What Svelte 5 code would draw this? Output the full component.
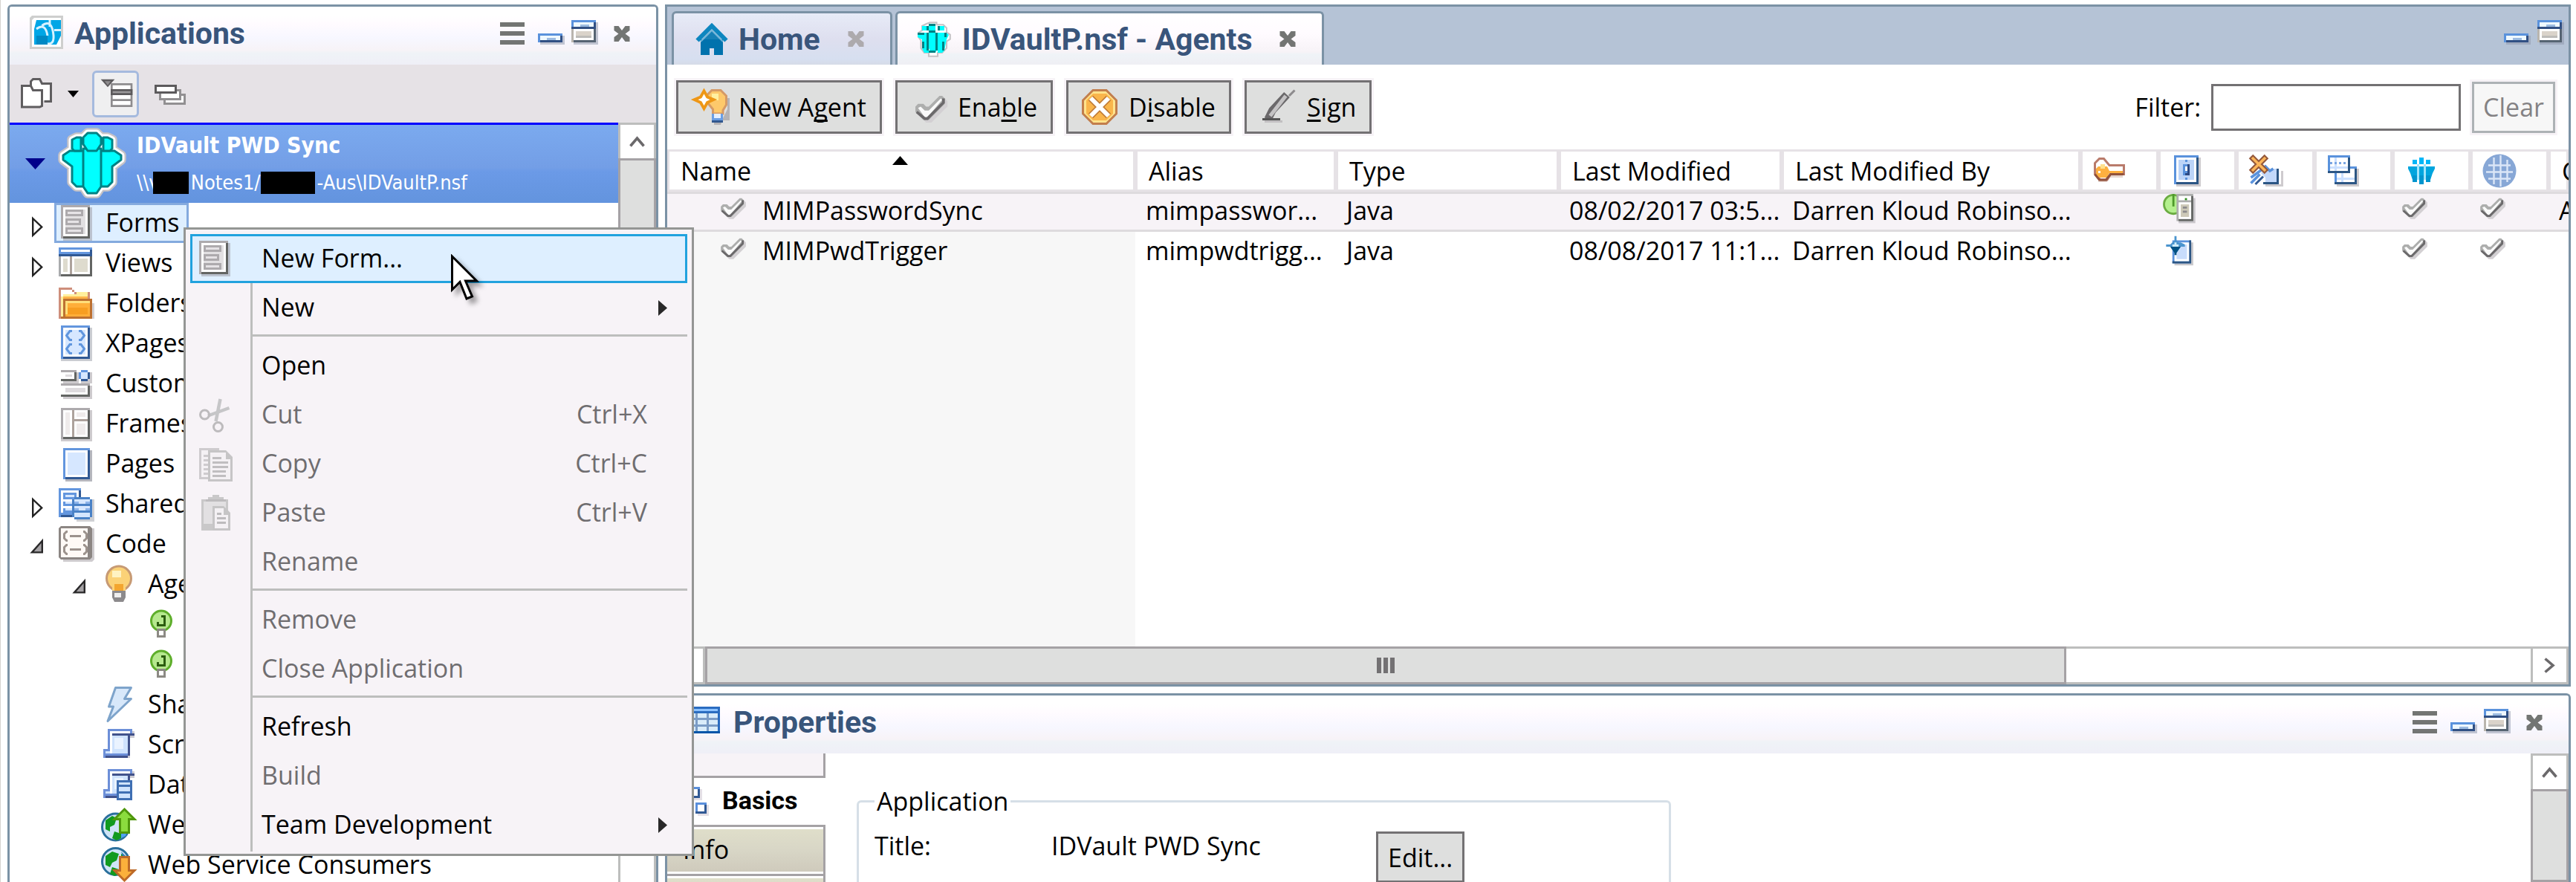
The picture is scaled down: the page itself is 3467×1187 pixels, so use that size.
<script lang="ts">
	type MenuItem = { label: string; icon?: string; keys?: string; disabled?: boolean; submenu?: boolean };

	const fill = (color: string, d: string) => `<path fill="${color}" d="${d}"/>`;
	const line = (color: string, d: string, w = 1) =>
		`<path fill="none" stroke="${color}" stroke-width="${w}" d="${d}"/>`;

	const crew = 'M3 12l3-2h6v16H9l-2-2v-7l-4-3zM29 12l-3-2h-6v16h3l2-2v-7l4-3zM12 9h8v17l-2 3h-4l-2-3z';
	const heads = 'M7 5l2-1h2v6H8L7 9zM25 5l-2-1h-2v6h3l1-1zM14 2h4l2 2v3l-2 3h-4l-2-3V4z';

	const tick =
		fill('#d3d0d3', 'M1 5l1-1h2l1 1h1l4-4h1l1 1v2l-6 6H4L1 7z') +
		fill('#adaead', 'M0 4l1-1h2l1 1h1l4-4h1l1 1v2L5 9H3L0 6z') +
		fill('#fbfbfb', 'M1 4.500l1-.5 1.500 1.500H5L9.500 1l.5.5L4.500 8h-1z') +
		line('#6b696b', 'M.5 6l3 2.500h1l6-6V1');
	const globe =
		'<circle cx="6.500" cy="9" r="6" fill="#cfe4f7" stroke="#2a6f9c"/>' +
		fill('#119a1f', 'M2 6l3-2 2 1-1 3-2 1v2l-2-1zM6 11l3 1v2l-2 1-2-1zM9 5l2 1v2H9z') +
		fill('#4ea2f2', 'M9 12l3-2-1 3-2 1z');
	const globeUp =
		'<circle cx="6.500" cy="6.500" r="6" fill="#cfe4f7" stroke="#2a6f9c"/>' +
		fill('#119a1f', 'M2 4l3-2 3 1-1 3-2 1-1 2-2-1zM5 9l3 1v2l-2 1-2-1zM9 3l2 1v2H9z') +
		fill('#2f78b8', 'M9 2l3 3v3h-1z');
	const scroll =
		fill('#cccbd2', 'M4 2h11v3h-2v9H3v-1h10z') +
		fill('#6c8fd8', 'M3 1h11v3h-2v10H1v-4h2z') +
		fill('#fff', 'M4 2h9v1H5v9H4z') +
		fill('#cfe3fd', 'M5 4h7v8H5zM2 11h2v1H2z') +
		fill('#41528b', 'M5 3h10v1H13v9h-1V4H5zM2 13h10v1H2z') +
		fill('#eaf3ff', 'M6 5h4v5H6z');

	const icons: Record<string, string> = {
		form:
			fill('#bcc3cf', 'M2 1h13v15H2z') +
			fill('#adaaad', 'M1 0h13v15H1z') +
			fill('#636563', 'M13 1h1v14H2v-1h11z') +
			fill('#fff', 'M2 1h11v13H2z') +
			fill('#e2e0e2', 'M3 2h9v11H3z') +
			fill('#adaaad', 'M3 2h8v3H3zM3 6h7v3H3zM3 10h8v3H3z') +
			fill('#e6e3e6', 'M4 3h6v1H4zM4 7h5v1H4zM4 11h6v1H4z'),
		view:
			fill('#a9abad', 'M0 4h15v10H0z') +
			fill('#636563', 'M14 5h1v9H1v-1h13z') +
			fill('#fff', 'M1 5h13v8H1z') +
			fill('#6396de', 'M0 1h15v4H0z') +
			fill('#315994', 'M14 2h1v3H0V4h14z') +
			fill('#fff', 'M1 2h13v1H1z') +
			fill('#dedbce', 'M2 6h2v6H2zM7 6h6v6H7z') +
			fill('#ada29c', 'M5 5h1v8H5z'),
		folder:
			fill('#d4d1d4', 'M1 15h15V8h-1v7z') +
			fill('#ce8e7b', 'M0 1h6v1h1v1h7v4h1v8H0z') +
			fill('#fff', 'M1 2h5v1h1v1h6v2H1z') +
			fill('#ffef9c', 'M1 5h1v9H1zM8 3h5v1H8zM2 4h11v1H2z') +
			fill('#ffb54a', 'M2 5h11v1H2z') +
			fill('#bd7131', 'M2 6h13v8H2zM1 14h14v1H1z') +
			fill('#ffdf7b', 'M3 7h11v6H3z') +
			fill('#ffae39', 'M4 8h10v6H3v-1h1z') +
			fill('#f79e21', 'M4 10h9v3H4z'),
		xpage:
			fill('#cbcdd2', 'M0 1h15v15H1V1z') +
			fill('#6396de', 'M1 0h13v15H1z') +
			fill('#315994', 'M13 1h1v14H2v-1h11z') +
			fill('#fff', 'M2 1h11v13H2z') +
			fill('#d6e7ff', 'M3 2h9v11H3z') +
			line('#6096de', 'M6 2.500H5l-1.500 2L5 6.500h1M9 2.500h1l1.500 2-1.500 2H9M6 8.500H5l-1.500 2L5 12.500h1M9 8.500h1l1.500 2-1.500 2H9'),
		custom:
			fill('#cecbce', 'M2 3h7v5H2zM2 9h13v6H2zM10 3h5v5h-5z') +
			fill('#adaaad', 'M1 2h7v5H1zM1 8h13v6H1z') +
			fill('#636563', 'M7 3h1v4H1V6h6zM13 9h1v5H1v-1h12z') +
			fill('#fff', 'M1 3h6v3H1zM1 9h12v4H1z') +
			fill('#dedbde', 'M3 4h3v1H3zM3 10h9v2H3z') +
			fill('#6396de', 'M10 2h3v1h1v3h-1v1h-3V6H9V3h1z') +
			fill('#315994', 'M10 6h3v1h-3zM13 3h1v3h-1z') +
			fill('#d6e7ff', 'M10 3h3v3h-3z'),
		frameset:
			fill('#cecbce', 'M1 2h14v14H1z') +
			fill('#adaaad', 'M1 1h13v14H1z') +
			fill('#636563', 'M13 2h1v13H2v-1h11z') +
			fill('#fff', 'M2 2h11v12H2z') +
			fill('#efebeb', 'M3 3h2v10H3zM8 3h4v2H8zM8 8h4v5H8z') +
			fill('#ada29c', 'M6 2h1v4h6v1H7v7H6z'),
		page:
			fill('#b5b6bd', 'M3 2h12v14H3z') +
			fill('#6396de', 'M2 1h12v14H2z') +
			fill('#315994', 'M13 2h1v13H3v-1h10z') +
			fill('#fff', 'M3 2h10v12H3z') +
			fill('#d6e7ff', 'M4 3h8v10H4z'),
		shared:
			fill('#6396de', 'M0 1h10v13H0z') +
			fill('#315994', 'M9 2h1v4H9zM1 13h6v1H1z') +
			fill('#fff', 'M1 2h8v10H1z') +
			fill('#6396de', 'M2 3h6v3H2zM2 7h5v2H2zM2 10h5v2H2z') +
			fill('#d6e7ff', 'M3 4h4v1H3zM3 7h4v1H3zM3 10h4v1H3z') +
			fill('#cfd0d4', 'M8 6h8v10H8z') +
			fill('#4a82c6', 'M7 5h7v1h1v8h-1v1H7v-1H6V6h1z') +
			fill('#d6e7ff', 'M7 6h7v2H7zM7 9h7v2H7zM7 12h7v2H7z') +
			fill('#8eb4ea', 'M7 7h2v1H7zM12 7h2v1h-2zM7 10h2v1H7zM12 10h2v1h-2z'),
		code:
			fill('#cecbce', 'M2 1h14v14l-1 1H2z') +
			fill('#8c8683', 'M1 0h13l1 1v13l-1 1H1l-1-1V1z') +
			fill('#fffaf6', 'M1 1h12v13H1z') +
			line('#9c928c', 'M4 2.500H3.500l-1 1v2l1 1H4M11 2.500h.5l1 1v2l-1 1H11M5 4.500h5M4 8.500H3.500l-1 1v2l1 1H4M11 8.500h.5l1 1v2l-1 1H11M5 10.500h5'),
		agents:
			'<circle cx="8" cy="5.500" r="5.500" fill="#fbd277" stroke="#c79a74"/>' +
			fill('#fbd277', 'M5 8h6v3H5z') +
			fill('#f3a52f', 'M6 8h4v3H6z') +
			fill('#fff3c2', 'M5 2h4v3H5z') +
			fill('#8c8a8c', 'M5 11h6v3l-1 2H6l-1-2z') +
			fill('#efefef', 'M6 12h3v2H6z'),
		java:
			'<circle cx="8" cy="6.500" r="4.500" fill="#b6e88e" stroke="#5eae2b"/>' +
			line('#2c5d10', 'M8 4.500h1.500v4h-3V7') +
			fill('#8c8a84', 'M6 10h4v4H6z') +
			fill('#fff', 'M7 11h2v2H7z'),
		action:
			'<path fill="#d8e8fa" stroke="#7ea4cb" stroke-linejoin="round" d="M6.500.5h7l-3 5h3L3 15.500l2.500-6.500h-2z"/>',
		script: scroll,
		database:
			scroll +
			fill('#3f6fb3', 'M7 6h7v9H7z') +
			fill('#cfe3fd', 'M8 7h5v1H8zM8 9h5v2H8zM8 12h5v2H8z'),
		provider:
			globe + '<path fill="#8bdc3e" stroke="#4f970d" d="M10.500 1l4.500 4.500h-2.500v6h-4v-6H6z"/>',
		consumer:
			globeUp + '<path fill="#fbb03b" stroke="#bd6a28" d="M8.500 4.500h4v6H15L10.500 15 6 10.500h2.500z"/>',
		cut:
			line('#c6c6c8', 'M10.500 1l-2 10M14.500 5L5 8.500', 1.5) +
			'<circle cx="3.500" cy="8" r="2" fill="none" stroke="#bdbbbd"/><circle cx="9.500" cy="13.500" r="2" fill="none" stroke="#bdbbbd"/>',
		copy:
			fill('#cecbce', 'M1 1h9v14H1z') +
			fill('#f4f1f4', 'M2 2h7v12H2z') +
			line('#cecbce', 'M3 4.500h2M3 6.500h2M3 8.500h2M3 10.500h2M3 12.500h2') +
			fill('#c6c5c6', 'M5 2h8l3 3v11H5z') +
			fill('#f4f1f4', 'M6 3h7v3h2v9H6z') +
			line('#c0bec0', 'M7 5.500h4M7 7.500h7M7 9.500h7M7 11.500h6M7 13.500h6'),
		paste:
			fill('#c9c8c9', 'M2 2h3V1h2V0h3v1h2v1h2v14H2z') +
			fill('#e2e0e2', 'M3 3h10v10H3z') +
			fill('#bdbbbd', 'M4 2h9v1H4z') +
			fill('#c6c5c6', 'M7 5h5l3 3v8H7z') +
			fill('#f4f1f4', 'M8 6h4v3h2v6H8z') +
			line('#bdbbbd', 'M9 8.500h2M9 10.500h4M9 12.500h4'),
		newagent:
			fill('#b5b3b5', 'M10 14h7V4h-1v5l-2 4-1 3h-3z') +
			'<path fill="#fdc96b" stroke="#d59a66" d="M9 .5h4L15.500 3v4L14 9.500V11H9.500V9L7 6V2.500z"/>' +
			fill('#fff0a0', 'M9 2h3v3H9z') +
			fill('#6a9ee4', 'M9 11h5v4H9z') +
			fill('#e4efff', 'M10 11h3v2h-3z') +
			fill('#31588f', 'M9 14h5v1H9z') +
			'<path fill="#fff" stroke="#ee9716" stroke-width="1.300" d="M5.500.8L7 3.500l2.800 1.200L7 6 5.500 8.700 4 6 1.200 4.700 4 3.500z"/>',
		tick: `<g transform="translate(2 2)">${tick}</g>`,
		enable: `<g transform="translate(2 3) scale(1.200)">${tick}</g>`,
		disable:
			'<path fill="#ffe38c" stroke="#c27e4c" d="M5 .5h6L15.500 5v6L11 15.500H5L.5 11V5z"/>' +
			fill('#f9b54b', 'M5 2h6l3 3v6l-3 3H5l-3-3V5z') +
			line('#c07a35', 'M4 4l8 8M12 4l-8 8', 3) +
			line('#fff', 'M4 4l8 8M12 4l-8 8', 2),
		sign:
			line('#6b696b', 'M3.500 13.500l2-4L12 2.500', 3.5) +
			line('#c4c3c4', 'M4.500 12L11.500 3', 1.7) +
			fill('#555', 'M1 13h8v1H1z') +
			fill('#c2c0c2', 'M2 14h8v1H2z') +
			line('#8c8a8c', 'M13 3l2.500-2.500'),
		key:
			fill('#e6d6d0', 'M3 12h4v1H3zM8 10h6v1H8z') +
			'<path fill="#fff" stroke="#b97b6b" d="M3.500 2.500h2l2.500 3h6.500v4h-6L7 12H4L1.500 9.500v-5z"/>' +
			fill('#fdb040', 'M3 6h4l1 2h6v1H8l-1 2H3l-1-1V7z') +
			fill('#ffe08c', 'M4 5h2v2H4z') +
			line('#91523c', 'M1.500 9.500l2 2.500h3l2-2.500h6', 1) +
			fill('#fff', 'M3 8h1v1H3z'),
		trigger:
			fill('#cecbce', 'M3 2h11v13H3z') +
			fill('#5a92dc', 'M2 1h11v13H2z') +
			fill('#2c5684', 'M12 2h1v12H3v-1h9z') +
			fill('#fff', 'M3 2h9v11H3z') +
			fill('#bcd4f8', 'M4 3h7v9H4z') +
			fill('#5a92dc', 'M6 5h3v5H6zM7 3h1v1H7zM7 11h1v1H7z') +
			fill('#2c4a84', 'M8 5h1v5H7V9h1z') +
			fill('#fff', 'M7 6h1v2H7z'),
		noreplace:
			fill('#cecbce', 'M8 14h7V8h1v7H8z') +
			fill('#2c5684', 'M7 13h6V7h1v7H7z') +
			fill('#c3d8fa', 'M6 9l2-2 2 1 2-1h1v6H8V11z') +
			line('#5a92dc', 'M1.500 11L7 7l1-1 2 2 1.500-1M1.500 13.500l4-4', 1.2) +
			line('#315a94', 'M3.500 14L7 10.500') +
			line('#93583c', 'M1.500 1.500l7 7M8.500 1.500l-7 7', 2.6) +
			line('#fcb65a', 'M2 2l6 6M8 2L2 8', 1.2),
		copydb:
			fill('#cecbce', 'M5 7h10v8H5z') +
			fill('#5a92dc', 'M4 6h10v8H4z') +
			fill('#2c5684', 'M13 7h1v7H4v-1h9z') +
			fill('#fff', 'M5 7h8v6H5z') +
			fill('#cbe0ff', 'M5 11h8v1H5zM7 9h1v4H7z') +
			fill('#5a92dc', 'M1 1h10v8H1z') +
			fill('#2c5684', 'M10 2h1v7H1V8h9z') +
			fill('#fff', 'M2 2h8v6H2z') +
			fill('#cbe0ff', 'M2 6h8v1H2zM4 2h1v6H4z') +
			fill('#7ba6e3', 'M2 4h1v1H2zM4 4h1v1H4zM6 4h1v1H6zM8 4h1v1H8z'),
		people:
			fill('#00a5de', 'M2 6h3v6H4L3 9 2 7zM14 6h-3v6h1l1-3 1-2zM5 6h1v6H5zM10 6h1v6h-1zM7 6h2v8H7z') +
			fill('#00b6f7', 'M4 3h2v2H4zM10 3h2v2h-2zM7 2h2v3H7z') +
			fill('#9fe4fb', 'M6 5h1v7H6zM9 5h1v7H9z') +
			fill('#0095ce', 'M4 10h2v3H4zM10 10h2v3h-2zM7 10h2v4H7z'),
		crewsmall:
			'<path fill="#fff" stroke="#c6c3c6" stroke-width="0.700" d="M5.500.4h3v1h3l1.500 1.500v2l1.600 1v2l-1.600 1v3L11 14H9v1.600H5V14H3l-1.500-2V8.500L.4 7V5L2 4V2l2-1z"/>' +
			fill('#0ff', 'M0 5h5v9H3l-1-2V8L0 7zM9 5h4l1 1-1 2-1 5-1 1H9zM5 5h4v7l-1 2H6l-1-2zM2 2h2v2H2zM10 2h2v2h-2zM5 1h3v3H5z') +
			fill('#008284', 'M0 5h3v1H0zM4 5h1v8H4zM8 5h1v8H8zM5 4h3v1H5zM4 2h1v2H4zM9 2h1v2H9zM2 9h1v3H2zM11 9h1v4h-1zM12 5h1v2h-1zM5 13h3v1H5zM5 1h3v1H5z'),
		world:
			'<circle cx="8" cy="8" r="7.500" fill="#87a7d6"/>' +
			line('#dbe6f7', 'M3 5.500h10M2 8.500h12M3 11.500h10M5.500 2v12M8.500 1v14M11.500 3v10', 0.8),
		scheduled:
			'<circle cx="4.500" cy="5" r="4.500" fill="#b4f08e" stroke="#6bac42"/>' +
			fill('#4d9a2a', 'M4 0h1v6H4z') +
			fill('#c9c6cb', 'M7 2h8v12H7z') +
			fill('#adaead', 'M6 0h8v13H6z') +
			fill('#636563', 'M13 1h1v12H7v-1h6z') +
			fill('#fff', 'M7 1h6v2H7zM7 4h6v8H7z') +
			fill('#cdc9b8', 'M8 5h4v6H8z') +
			fill('#2e8d1d', 'M10 2h1v1h-1z') +
			fill('#8c8a8c', 'M9 6h2v1H9zM9 8h2v1H9z'),
		event:
			fill('#c9c8cb', 'M5 4h9v11H5z') +
			fill('#5a92dc', 'M4 3h9v11H4z') +
			fill('#2c5684', 'M12 3h1v11H4v-1h8z') +
			fill('#fff', 'M5 4h7v9H5z') +
			fill('#c8dcfb', 'M6 5h5v7H6z') +
			fill('#4a94ce', 'M5 1h1v2l1 1h1l2 1v1H8L6 9H5L3 6H1V5h2l2-2z') +
			fill('#005284', 'M3 6h5L6 9v1H5V9z') +
			fill('#d0ecfa', 'M5 4h1v1h1v1H4V5h1z'),
		home:
			fill('#0072ad', 'M3 8h10v7h-4v-3H7v3H3z') +
			line('#0d86bf', 'M1.500 8.500L8 2l6.500 6.500', 2) +
			fill('#1680b6', 'M4 8l4-4 4 4z') +
			line('#6fb2d6', 'M3 9l5-5 5 5', 0.6),
		apps:
			fill('#cecfce', 'M1 0h14v15H0V1z') +
			fill('#fff', 'M2 1h12v13H1V2z') +
			fill('#00a6e6', 'M3 2h11v7l-2 4H2V6z') +
			line('#d8f2ff', 'M9 2v3M14 6.500h-3M5.500 4.500q4-3 5 3t-3 5M3 6q4-3 5 3') +
			fill('#0089c4', 'M3 9h5v4H3z'),
		table:
			fill('#2a6cc0', 'M0 1h16v3H0z') +
			fill('#8cc2ff', 'M1 2h14v1H1z') +
			fill('#2a6cc0', 'M0 4h16v9H0z') +
			fill('#d9ecfa', 'M1 4h14v8H1z') +
			line('#7b9cc6', 'M1 6.500h14M1 9.500h14M5.500 4v8M10.500 4v8') +
			fill('#0055a8', 'M0 12h16v1H0z'),
		basics:
			fill('#e4e0e6', 'M6 3h6v5H6zM10 10h5v5h-5z') +
			fill('#5a8fdc', 'M5 2h6v5H5zM1 9h5v5H1zM9 9h5v5H9z') +
			fill('#315994', 'M10 3h1v4H5V6h5zM13 10h1v4H9v-1h4z') +
			fill('#fff', 'M6 3h4v3H6zM2 10h3v3H2zM10 10h3v3h-3z'),
		folders:
			'<path fill="#fff" stroke="#5f5d5f" d="M5.500 5.500v-3l1-1h3l1 2h4v8h-3"/>' +
			'<path fill="#fff" stroke="#5f5d5f" d="M1.500 4.500h4l1 2h4v7l-1 .5h-8z"/>',
		tree:
			fill('#5c5a5c', 'M1 0h7L4.500 4z') +
			fill('#8e8c8e', 'M3 1h3L4.500 3z') +
			fill('#8e8c8e', 'M6 2h11v12H6z') +
			fill('#fff', 'M7 3h9v2H7zM7 8h9v2H7zM7 11h9v2H7z') +
			fill('#5c5a5c', 'M6 5h11v3H6z') +
			fill('#9c9a9c', 'M7 6h9v1H7z'),
		collapse:
			fill('#929092', 'M5 8h10v5H5z') +
			fill('#fff', 'M6 9h8v3H6z') +
			fill('#929092', 'M3 6h10v5H3z') +
			fill('#fff', 'M4 7h8v3H4z') +
			fill('#5c5a5c', 'M1 4h10v4H1z') +
			fill('#fff', 'M2 5h8v2H2z')
	};

	const tree = [
		{ label: 'Forms', icon: 'form', level: 0, twisty: 'closed', selected: true },
		{ label: 'Views', icon: 'view', level: 0, twisty: 'closed' },
		{ label: 'Folders', icon: 'folder', level: 0 },
		{ label: 'XPages', icon: 'xpage', level: 0 },
		{ label: 'Custom Controls', icon: 'custom', level: 0 },
		{ label: 'Framesets', icon: 'frameset', level: 0 },
		{ label: 'Pages', icon: 'page', level: 0 },
		{ label: 'Shared Elements', icon: 'shared', level: 0, twisty: 'closed' },
		{ label: 'Code', icon: 'code', level: 0, twisty: 'open' },
		{ label: 'Agents', icon: 'agents', level: 1, twisty: 'open' },
		{ label: 'MIMPasswordSync', icon: 'java', level: 2 },
		{ label: 'MIMPwdTrigger', icon: 'java', level: 2 },
		{ label: 'Shared Actions', icon: 'action', level: 1 },
		{ label: 'Script Libraries', icon: 'script', level: 1 },
		{ label: 'Database Script', icon: 'database', level: 1 },
		{ label: 'Web Service Providers', icon: 'provider', level: 1 },
		{ label: 'Web Service Consumers', icon: 'consumer', level: 1 }
	];

	const menu: MenuItem[][] = [
		[{ label: 'New Form...', icon: 'form' }, { label: 'New', submenu: true }],
		[
			{ label: 'Open' },
			{ label: 'Cut', icon: 'cut', keys: 'Ctrl+X', disabled: true },
			{ label: 'Copy', icon: 'copy', keys: 'Ctrl+C', disabled: true },
			{ label: 'Paste', icon: 'paste', keys: 'Ctrl+V', disabled: true },
			{ label: 'Rename', disabled: true }
		],
		[
			{ label: 'Remove', disabled: true },
			{ label: 'Close Application', disabled: true }
		],
		[
			{ label: 'Refresh' },
			{ label: 'Build', disabled: true },
			{ label: 'Team Development', submenu: true }
		]
	];

	// label is split round its access key
	const actions = [
		{ icon: 'newagent', label: ['New A', 'g', 'ent'] },
		{ icon: 'enable', label: ['Ena', 'b', 'le'] },
		{ icon: 'disable', label: ['D', 'i', 'sable'] },
		{ icon: 'sign', label: ['', 'S', 'ign'] }
	];

	const flags = [
		{ icon: 'key', title: 'Restricted' },
		{ icon: 'trigger', title: 'Trigger' },
		{ icon: 'noreplace', title: 'Prohibit replace' },
		{ icon: 'copydb', title: 'Propagate' },
		{ icon: 'people', title: 'Notes' },
		{ icon: 'world', title: 'Web' }
	];

	const agents = [
		{
			name: 'MIMPasswordSync',
			alias: 'mimpasswor...',
			type: 'Java',
			modified: '08/02/2017 03:5...',
			by: 'Darren Kloud Robinso...',
			flags: ['', 'scheduled', '', '', 'tick', 'tick'],
			rest: 'A'
		},
		{
			name: 'MIMPwdTrigger',
			alias: 'mimpwdtrigg...',
			type: 'Java',
			modified: '08/08/2017 11:1...',
			by: 'Darren Kloud Robinso...',
			flags: ['', 'event', '', '', 'tick', 'tick'],
			rest: ''
		}
	];

	let selected = $state(0);
	let hovered = $state('New Form...');
	let filter = $state('');
</script>

{#snippet icon(name: string)}
	<svg class="icon" viewBox="0 0 16 16" aria-hidden="true">{@html icons[name]}</svg>
{/snippet}

{#snippet cross()}
	<svg class="cross" viewBox="0 0 7 7" aria-hidden="true">
		<path d="M0 0h2l1.500 2L5 0h2v2L5 3.500 7 5v2H5L3.500 5 2 7H0V5l2-1.500L0 2z" />
	</svg>
{/snippet}

{#snippet controls(full: boolean)}
	<div class="controls">
		{#if full}
			<button class="view-menu" aria-label="View menu">
				<svg viewBox="0 0 12 12"><path fill="#737573" d="M0 1h11v2H0zM0 5h11v2H0zM0 9h11v2H0z" /></svg>
			</button>
		{/if}
		<button aria-label="Minimize">
			<svg viewBox="0 0 12 12">
				<path fill="#8c94a8" opacity=".5" d="M1 7h11v4H1z" />
				<path fill="#5a92dc" d="M0 6h11v4H0z" />
				<path fill="#315084" d="M10 7h1v3H1V9h9z" />
				<path fill="#eef8ff" d="M1 7h9v2H1z" />
				<path fill="#9cbbe0" d="M4 8h4v1H4z" />
			</svg>
		</button>
		<button aria-label="Maximize">
			<svg viewBox="0 0 12 12">
				<path fill="#8c94a8" opacity=".5" d="M1 1h11v10H1z" />
				<path fill="#b9b5ae" d="M0 4h11v6H0z" />
				<path fill="#566472" d="M10 4h1v6H1V9h9z" />
				<path fill="#fff" d="M1 4h9v5H1z" />
				<path fill="#5a92dc" d="M0 0h11v4H0z" />
				<path fill="#315084" d="M10 1h1v3H0V3h10z" />
				<path fill="#eef8ff" d="M1 1h9v2H1z" />
				<path fill="#9cbbe0" d="M4 2h4v1H4z" />
				<path fill="#dad3ca" d="M2 5h7v2H2z" />
				<path fill="#bdbcb9" d="M2 7h7v1H2z" />
			</svg>
		</button>
		{#if full}
			<button class="close" aria-label="Close">{@render cross()}</button>
		{/if}
	</div>
{/snippet}

{#snippet vscroll()}
	<div class="vscroll">
		<button aria-label="Scroll up">
			<svg viewBox="0 0 7 5"><path fill="none" stroke="#6b696b" stroke-width="1.200" d="M.5 4.500l3-3.500 3 3.500" /></svg>
		</button>
		<div class="thumb"></div>
	</div>
{/snippet}

<div class="workbench">
	<aside class="panel">
		<header class="title">
			{@render icon('apps')}
			<h2>Applications</h2>
			{@render controls(true)}
		</header>

		<div class="toolbar">
			<button aria-label="Open application">{@render icon('folders')}</button>
			<button class="drop" aria-label="More">
				<svg viewBox="0 0 5 3"><path d="M0 0h5L2.500 3z" /></svg>
			</button>
			<button class="toggle" aria-label="Show tree" aria-pressed="true">
				<svg class="icon" viewBox="0 0 18 16">{@html icons.tree}</svg>
			</button>
			<button aria-label="Collapse all">{@render icon('collapse')}</button>
		</div>

		<div class="navigator">
			<div class="tree">
				<div class="app">
					<svg class="app-twisty" viewBox="0 0 9 5" aria-hidden="true"><path fill="#00008b" d="M0 0h9L4.500 5z" /></svg>
					<svg class="crew" viewBox="0 0 32 32" aria-hidden="true">
						<g stroke-linejoin="round">
							<path d={crew + heads} fill="#c6c3c6" stroke="#c6c3c6" stroke-width="4.500" />
							<path d={crew + heads} fill="#fff" stroke="#fff" stroke-width="3" />
							<path d={crew} fill="#0ff" stroke="#008284" />
							<path d={heads} fill="#0ff" stroke="#008284" />
						</g>
					</svg>
					<div>
						<h3>IDVault PWD Sync</h3>
						<p>\\v<span class="redacted short"></span>Notes1/<span class="redacted"></span>-Aus\IDVaultP.nsf</p>
					</div>
				</div>

				<ul>
					{#each tree as node}
						<li style="--level: {node.level}">
							<svg class="twisty" viewBox="0 0 6 18" aria-hidden="true">
								{#if node.twisty === 'closed'}
									<path fill="#fff" stroke="#222" stroke-width="0.800" d="M1.400 7v7.600l4-3.800z" />
								{:else if node.twisty === 'open'}
									<path fill="#a5a2a5" stroke="#292829" stroke-width="0.800" d="M5.600 7.600v5.200H1z" />
								{/if}
							</svg>
							<span class="node" class:selected={node.selected}>{@render icon(node.icon)}{node.label}</span>
						</li>
					{/each}
				</ul>
			</div>
			{@render vscroll()}
		</div>
	</aside>

	<main>
		<section class="panel editor">
			<div class="tabs">
				<div class="tab">
					{@render icon('home')}
					<h2>Home</h2>
					<button aria-label="Close Home">{@render cross()}</button>
				</div>
				<div class="tab active">
					{@render icon('crewsmall')}
					<h2>IDVaultP.nsf - Agents</h2>
					<button aria-label="Close Agents">{@render cross()}</button>
				</div>
				{@render controls(false)}
			</div>

			<div class="actions">
				{#each actions as action}
					<button class="push">
						{@render icon(action.icon)}
						<span>{action.label[0]}<u>{action.label[1]}</u>{action.label[2]}</span>
					</button>
				{/each}
				<label for="filter">Filter:</label>
				<input id="filter" type="text" bind:value={filter} />
				<button class="push clear" disabled={!filter}>Clear</button>
			</div>

			<div class="list">
				<table>
					<colgroup>
						<col class="w-name" />
						<col class="w-alias" />
						<col class="w-type" />
						<col class="w-type" />
						<col class="w-by" />
						{#each flags as _}<col class="w-flag" />{/each}
						<col />
					</colgroup>
					<thead>
						<tr>
							<th aria-sort="ascending">
								Name
								<svg class="sort" viewBox="0 0 7 4" aria-hidden="true"><path d="M0 4h7L3.500 0z" /></svg>
							</th>
							<th>Alias</th>
							<th>Type</th>
							<th>Last Modified</th>
							<th>Last Modified By</th>
							{#each flags as flag}<th class="flag" aria-label={flag.title}>{@render icon(flag.icon)}</th>{/each}
							<th>C</th>
						</tr>
					</thead>
					<tbody>
						{#each agents as agent, i}
							<tr class:current={selected === i} onclick={() => (selected = i)}>
								<td class="name">{@render icon('tick')}{agent.name}</td>
								<td>{agent.alias}</td>
								<td>{agent.type}</td>
								<td>{agent.modified}</td>
								<td>{agent.by}</td>
								{#each agent.flags as flag}
									<td class="flag">{#if flag}{@render icon(flag)}{/if}</td>
								{/each}
								<td>{agent.rest}</td>
							</tr>
						{/each}
					</tbody>
				</table>
			</div>

			<div class="hscroll">
				<button aria-label="Scroll left">
					<svg viewBox="0 0 5 7"><path fill="none" stroke="#6b696b" d="M4.500.5l-3.500 3 3.500 3" /></svg>
				</button>
				<div class="thumb"><i></i><i></i><i></i></div>
				<div class="rest"></div>
				<button aria-label="Scroll right">
					<svg viewBox="0 0 5 7"><path fill="none" stroke="#6b696b" stroke-width="1.200" d="M.5.5l3.500 3-3.500 3" /></svg>
				</button>
			</div>
		</section>

		<section class="panel properties">
			<header class="title">
				{@render icon('table')}
				<h2>Properties</h2>
				{@render controls(true)}
			</header>

			<div class="sheet">
				<nav>
					<div class="spacer"></div>
					<button class="basics">{@render icon('basics')}Basics</button>
					<button>Info</button>
					<button aria-label="Launch"></button>
				</nav>
				<div class="fields">
					<fieldset>
						<legend>Application</legend>
						<div class="field">
							<span>Title:</span>
							<span>IDVault PWD Sync</span>
							<button class="push">Edit...</button>
						</div>
					</fieldset>
				</div>
				{@render vscroll()}
			</div>
		</section>
	</main>

	<div class="menu" role="menu">
		{#each menu as group}
			<div class="group">
				{#each group as item}
					<button
						role="menuitem"
						disabled={item.disabled}
						class:hovered={hovered === item.label}
						onmouseenter={() => (hovered = item.label)}
					>
						<span class="gutter">{#if item.icon}{@render icon(item.icon)}{/if}</span>
						<span class="label">{item.label}</span>
						{#if item.keys}<kbd>{item.keys}</kbd>{/if}
						{#if item.submenu}
							<svg class="more" viewBox="0 0 4 7" aria-hidden="true"><path fill="#292829" d="M0 0l4 3.500L0 7z" /></svg>
						{/if}
					</button>
				{/each}
			</div>
		{/each}
	</div>

	<svg class="cursor" viewBox="0 0 14 23" aria-hidden="true">
		<path fill="#fff" stroke="#000" d="M.5 1v15l3.500-3.500 3 7.500 2.500-1-3-7h5z" />
	</svg>
</div>

<style>
	:global(body) {
		margin: 0;
		overflow: hidden;
	}

	.workbench {
		position: relative;
		display: flex;
		gap: 9px;
		box-sizing: border-box;
		height: 100vh;
		padding: 6px 7px 0 9px;
		border-left: 1px solid #d6d3ce;
		overflow: hidden;
		background: #fff;
		color: #000;
		font: 34px/50px 'Open Sans', 'Noto Sans', sans-serif;
	}

	button {
		padding: 0;
		border: 0;
		background: none;
		color: inherit;
		font: inherit;
	}

	svg {
		display: block;
		flex: none;
	}

	.icon {
		width: 48px;
		height: 48px;
		overflow: visible;
	}

	h2,
	h3,
	p,
	ul {
		margin: 0;
		padding: 0;
		font-weight: normal;
	}

	h2 {
		color: #39557b;
		font: bold 41px/50px Roboto, sans-serif;
	}

	.panel {
		display: flex;
		flex-direction: column;
		box-sizing: border-box;
		border: 3px solid #7b92a5;
		border-bottom: 0;
		border-radius: 6px 6px 0 0;
		overflow: hidden;
	}

	aside {
		flex: none;
		width: 876px;
	}

	.title {
		display: flex;
		flex: none;
		align-items: center;
		gap: 12px;
		box-sizing: border-box;
		height: 78px;
		padding: 0 34px 6px 27px;
		background: linear-gradient(#fff 15%, #fffbff 30%, #f7f7ff 55%, #f7f3f7 75%, #eff3f7 80%, #efeff7);
	}

	.controls {
		display: flex;
		gap: 9px;
		margin-left: auto;

		& svg {
			width: 36px;
			height: 36px;
		}

		& .view-menu {
			margin-right: 6px;
		}

		& .close {
			margin-left: 11px;
		}
	}

	.controls .cross,
	.cross {
		width: 24px;
		height: 21px;
		fill: #737573;
	}

	.toolbar {
		display: flex;
		flex: none;
		align-items: center;
		gap: 18px;
		height: 78px;
		padding: 0 12px;
		background: #e6e2e6;

		& .drop svg {
			width: 15px;
			height: 9px;
		}

		& .toggle {
			box-sizing: border-box;
			width: 63px;
			height: 63px;
			padding: 6px;
			border: 3px solid #a5bade;
			border-radius: 6px;
			background: #efeff0;
		}
	}

	.navigator {
		display: flex;
		flex: 1;
		min-height: 0;
	}

	.tree {
		flex: 1;
		min-width: 0;
		overflow: hidden;
	}

	.app {
		display: flex;
		align-items: center;
		height: 105px;
		padding-left: 21px;
		border-top: 3px solid #00f;
		background: linear-gradient(#7baaef, #739ee6 55%, #6b9ae7 60%, #6394de);
		color: #fff;
		font-family: 'DejaVu Sans Condensed', sans-serif;

		& .app-twisty {
			width: 27px;
			height: 15px;
			margin-right: 15px;
		}

		& .crew {
			width: 96px;
			height: 96px;
			margin-right: 12px;
			overflow: visible;
		}

		& h3 {
			font-size: 30px;
			font-weight: bold;
			line-height: 50px;
		}

		& p {
			display: flex;
			align-items: center;
			font-size: 27px;
			line-height: 50px;
		}
	}

	.redacted {
		width: 73px;
		height: 30px;
		margin-right: 3px;
		background: #000;

		&.short {
			width: 48px;
			margin-left: -9px;
		}
	}

	li {
		display: flex;
		height: 54px;
		padding-left: calc(27px + var(--level) * 57px);
		white-space: nowrap;
	}

	.twisty {
		width: 18px;
		height: 54px;
		margin-right: 15px;
	}

	.node {
		display: flex;
		gap: 15px;
		box-sizing: border-box;
		padding: 0 9px 0 3px;
		border: 3px solid transparent;
		line-height: 46px;

		&.selected {
			border-color: #84aade;
			background: #deefff;
		}
	}

	.vscroll {
		display: flex;
		flex: none;
		flex-direction: column;
		box-sizing: border-box;
		width: 51px;
		border: 3px solid #bdbebd;
		border-width: 3px 3px 0;

		& button {
			display: grid;
			flex: none;
			place-items: center;
			height: 45px;
		}

		& svg {
			width: 21px;
			height: 15px;
		}

		& .thumb {
			flex: 0 1 600px;
			margin: 0 -3px;
			box-sizing: border-box;
			border: 3px solid #a5a2a5;
			background: #dedfde;
		}
	}

	main {
		display: flex;
		flex: 1;
		flex-direction: column;
		gap: 9px;
		min-width: 0;
	}

	.editor {
		flex: 1;
		min-height: 0;
		border-bottom: 3px solid #7b92a5;
		border-radius: 0;
	}

	.tabs {
		display: flex;
		flex: none;
		align-items: flex-end;
		gap: 4px;
		height: 78px;
		padding: 0 6px;
		background: #b5c3d6;

		& .controls {
			align-self: center;
			padding-bottom: 6px;
		}
	}

	.tab {
		display: flex;
		align-items: center;
		box-sizing: border-box;
		height: 72px;
		padding: 0 34px 0 27px;
		border: 3px solid #7b92a5;
		border-bottom: 0;
		border-radius: 6px 6px 0 0;
		background: linear-gradient(#e7ebf7, #dedfef 50%, #d6dff0 90%, #d6dbe7);

		&.active {
			background: linear-gradient(#fff, #fffbff 40%, #f7f3f7 75%, #eff3f7 80%, #efeff4);
		}

		& h2 {
			margin: 0 36px 0 12px;
		}

		& .cross {
			fill: #adaaad;
		}

		&.active .cross {
			fill: #737573;
		}
	}

	.actions {
		display: flex;
		flex: none;
		gap: 18px;
		align-items: center;
		box-sizing: border-box;
		height: 114px;
		padding: 0 18px 0 12px;

		& label {
			margin: 0 -4px 0 auto;
		}

		& input {
			box-sizing: border-box;
			width: 336px;
			height: 63px;
			padding: 0 9px;
			border: 3px solid #737173;
			background: #fff;
			font: inherit;
			outline: none;
		}
	}

	.push {
		display: flex;
		align-items: center;
		gap: 15px;
		box-sizing: border-box;
		height: 72px;
		padding: 0 18px;
		border: 3px solid #737173;
		background: #dedfde;
		box-shadow: 0 0 0 3px #f7f3f7;

		& u {
			text-decoration-thickness: 3px;
			text-underline-offset: 4px;
			text-decoration-skip-ink: none;
		}

		&.clear {
			height: 69px;
			margin-left: -3px;
			padding: 0 12px;
			border-color: #adb2b5;
			background: #f7f7f7;
			color: #848284;
		}
	}

	.list {
		flex: 1;
		min-height: 0;
		overflow: hidden;
		background: linear-gradient(90deg, #f7f7f7 630px, #fff 630px);
	}

	table {
		width: 100%;
		border-spacing: 0;
		table-layout: fixed;
		white-space: nowrap;
	}

	.w-name {
		width: 630px;
	}

	.w-alias {
		width: 270px;
	}

	.w-type {
		width: 300px;
	}

	.w-by {
		width: 402px;
	}

	.w-flag {
		width: 105px;
	}

	th {
		position: relative;
		box-sizing: border-box;
		height: 57px;
		padding: 0 0 0 15px;
		border: 3px solid #e6e2e6;
		background: #fff;
		font-weight: normal;
		text-align: left;

		&.flag {
			padding-left: 12px;
		}
	}

	.sort {
		position: absolute;
		top: 6px;
		left: 50%;
		width: 21px;
		height: 12px;
		margin-left: -12px;
	}

	td {
		box-sizing: border-box;
		height: 54px;
		padding: 0 0 3px 14px;
		border: 3px solid transparent;
		border-width: 3px 0;
		line-height: 45px;

		&.name {
			padding-left: 65px;

			& .icon {
				float: left;
				margin-right: 15px;
			}
		}

		&.flag {
			padding-left: 6px;
		}
	}

	td .icon {
		height: 45px;
	}

	.current td {
		border-color: #dedbde;
		background: #f7f3f7;
	}

	.hscroll {
		display: flex;
		flex: none;
		box-sizing: border-box;
		height: 51px;
		border: solid #bdbebd;
		border-width: 3px 0;

		& button {
			display: grid;
			place-items: center;
			box-sizing: border-box;
			width: 51px;
			border: solid #bdbebd;
			border-width: 0 3px;
		}

		& svg {
			width: 15px;
			height: 21px;
		}

		& .thumb {
			display: flex;
			flex: 1833;
			align-items: center;
			justify-content: center;
			gap: 3px;
			margin: -3px 0;
			border: 3px solid #a5a2a5;
			background: #dedfde;
		}

		& .rest {
			flex: 627;
		}

		& i {
			width: 6px;
			height: 21px;
			background: #737173;
		}
	}

	.properties {
		flex: none;
		height: 254px;

		& .title {
			padding-left: 23px;
			gap: 18px;
		}
	}

	.sheet {
		display: flex;
		flex: 1;
		min-height: 0;
	}

	nav {
		flex: none;
		width: 213px;

		& .spacer {
			height: 30px;
			border: solid #a5a2a5;
			border-width: 0 3px 3px 0;
			background: #f7f3f7;
		}

		& button {
			display: block;
			box-sizing: border-box;
			width: 100%;
			height: 66px;
			padding: 0 0 3px 21px;
			border: solid #a5a2a5;
			border-width: 3px 3px 0 0;
			background: linear-gradient(#e0dfca, #d8d6c6 50%, #cec9bb);
			box-shadow: inset 0 3px #fff, inset 0 -3px #fff;
			text-align: left;
		}

		& .basics {
			display: flex;
			align-items: center;
			gap: 15px;
			height: 63px;
			padding: 0 0 3px 11px;
			border: 0;
			background: #fff;
			box-shadow: none;
			font: bold 34px/50px Roboto, sans-serif;
		}
	}

	.fields {
		flex: 1;
		padding: 39px 42px 0;
	}

	fieldset {
		box-sizing: border-box;
		max-width: 1096px;
		height: 240px;
		margin: 0;
		padding: 0 21px;
		border: 3px solid #d6dfe7;
		border-radius: 6px;
	}

	legend {
		padding: 0 3px;
	}

	.field {
		display: grid;
		grid-template-columns: 238px 437px auto;
		justify-content: start;
		align-items: start;
		padding-top: 10px;

		& .push {
			height: 69px;
			margin-top: 6px;
			padding: 0 13px;
			box-shadow: none;
		}
	}

	.menu {
		position: absolute;
		top: 306px;
		left: 246px;
		box-sizing: border-box;
		width: 687px;
		padding: 6px;
		border: 3px solid #949694;
		background: linear-gradient(#bdbebd, #bdbebd) 87px 72px / 3px 765px no-repeat #f7f3f7;

		& button {
			display: flex;
			align-items: center;
			box-sizing: border-box;
			width: 100%;
			height: 66px;
			padding: 0 24px 0 6px;
			border: 3px solid transparent;
			text-align: left;

			&.hovered {
				border-color: #21a2de;
				background: #deefff;
			}

			&:disabled {
				color: #6f6d70;
			}
		}

		& .label,
		& kbd {
			padding-bottom: 3px;
		}

		& .label {
			flex: 1;
		}

		& kbd {
			margin-right: 27px;
			font: inherit;
		}
	}

	.group + .group::before {
		content: '';
		display: block;
		height: 3px;
		margin: 3px 0 6px 81px;
		background: #bdbebd;
	}

	.gutter {
		width: 87px;
	}

	.more {
		width: 12px;
		height: 21px;
	}

	.cursor {
		position: absolute;
		top: 342px;
		left: 606px;
		width: 42px;
		height: 69px;
		filter: drop-shadow(6px 6px 3px rgb(0 0 0 / 0.35));
	}
</style>
